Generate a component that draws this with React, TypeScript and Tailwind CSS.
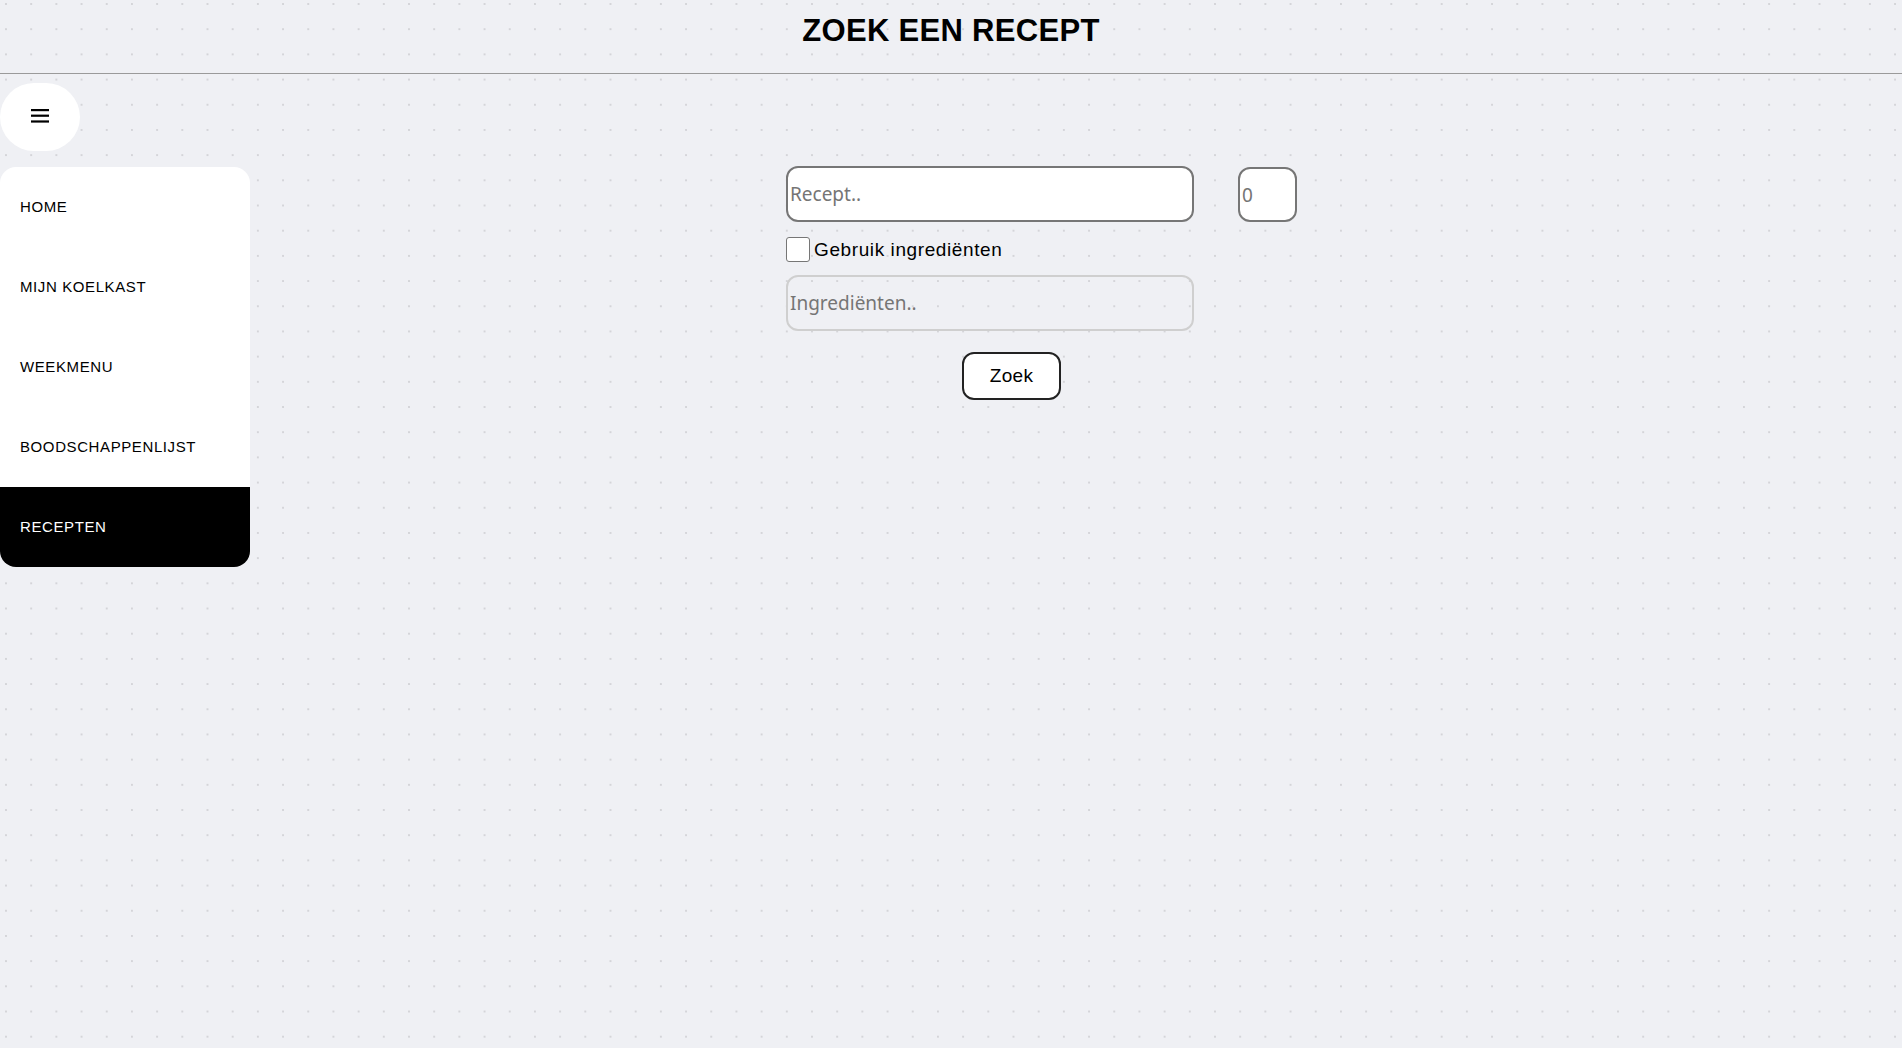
import React from "react";

const navItems = ["HOME", "MIJN KOELKAST", "WEEKMENU", "BOODSCHAPPENLIJST", "RECEPTEN"];

export default function App() {
  return (
    <div className="min-h-screen w-full bg-[#eff0f4] bg-[radial-gradient(circle,#c4c4c8_0.55px,transparent_0.9px)] bg-[size:25.2px_25.2px] bg-[position:-6.6px_-8.6px] font-['Liberation_Sans',Arial,sans-serif] text-black">
      <header className="h-[74px] border-b border-[#9a9a9a] flex justify-center">
        <h1 className="pt-[11px] text-[31px] leading-[40px] font-bold tracking-[0.3px]">ZOEK EEN RECEPT</h1>
      </header>
      <div className="flex">
        <div className="w-[250px] shrink-0 flex flex-col">
          <button className="mt-[9px] w-[80px] h-[68px] rounded-full bg-white flex items-center justify-center">
            <svg width="18" height="14" viewBox="0 0 18 14" className="mt-[-2px]">
              <rect x="0" y="0" width="18" height="2.2" fill="#000" />
              <rect x="0" y="5.6" width="18" height="2.2" fill="#000" />
              <rect x="0" y="11.4" width="18" height="2.2" fill="#000" />
            </svg>
          </button>
          <nav className="mt-[16px] bg-white rounded-[16px] overflow-hidden flex flex-col">
            {navItems.map((item) => (
              <div
                key={item}
                className={
                  item === "RECEPTEN"
                    ? "h-[80px] flex items-center pl-[20px] text-[15px] tracking-[0.6px] bg-black text-white"
                    : "h-[80px] flex items-center pl-[20px] text-[15px] tracking-[0.6px] text-black"
                }
              >
                {item}
              </div>
            ))}
          </nav>
        </div>
        <div className="ml-[536px] mt-[92px] flex flex-col">
          <div className="flex">
            <input
              type="text"
              placeholder="Recept.."
              className="w-[408px] h-[56px] border-2 border-[#767676] rounded-[12px] bg-white px-[2px] text-[19px] font-['Noto_Sans',sans-serif] placeholder:text-[#757575] outline-none"
            />
            <input
              type="text"
              placeholder="0"
              className="ml-[44px] mt-[1px] w-[59px] h-[55px] border-2 border-[#767676] rounded-[12px] bg-white px-[2px] text-[19px] font-['Noto_Sans',sans-serif] placeholder:text-[#757575] outline-none"
            />
          </div>
          <div className="mt-[15px] flex items-center">
            <div className="w-[24px] h-[25px] border border-[#767676] rounded-[3px] bg-white" />
            <span className="ml-[4px] text-[19px] leading-[24px] tracking-[0.6px]">Gebruik ingrediënten</span>
          </div>
          <input
            type="text"
            disabled
            placeholder="Ingrediënten.."
            className="mt-[13px] w-[408px] h-[56px] border-2 border-[#cfcfcf] rounded-[12px] bg-transparent px-[2px] text-[19px] font-['Noto_Sans',sans-serif] placeholder:text-[#757575] outline-none"
          />
          <div className="mt-[21px]">
            <button className="ml-[176px] w-[99px] h-[48px] border-2 border-[#222] rounded-[12px] bg-white text-[19px] tracking-[0.3px]">
              Zoek
            </button>
          </div>
        </div>
      </div>
    </div>
  );
}
